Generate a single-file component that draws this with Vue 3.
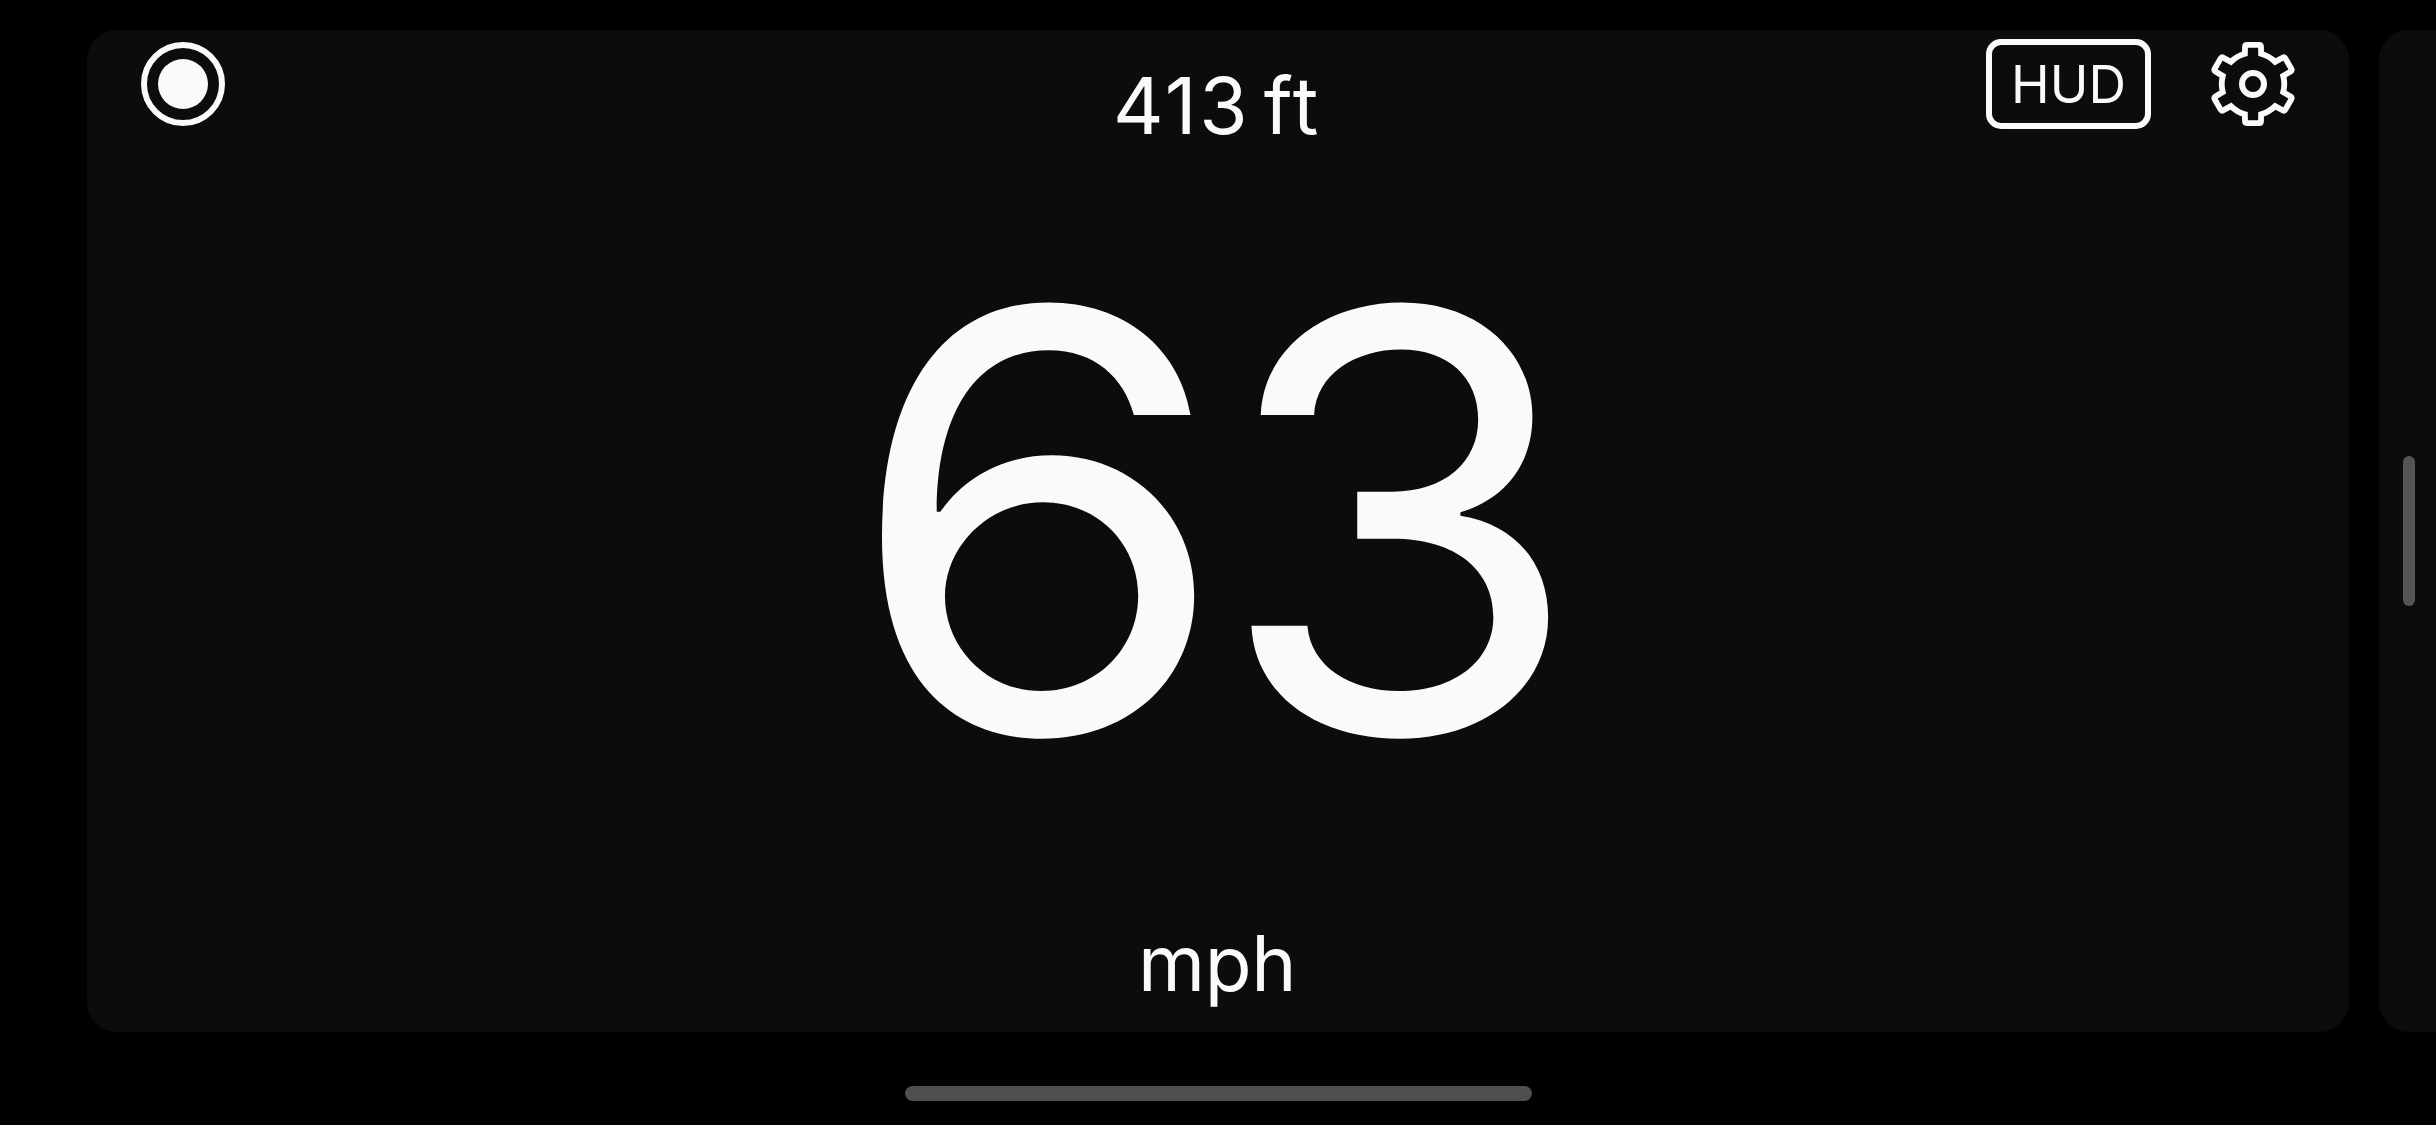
<template>
  <div class="screen">
    <div class="pages">
      <main class="panel">
        <div class="side">
          <button class="icon-btn" aria-label="Record">
            <svg viewBox="0 0 84 84" width="84" height="84">
              <circle cx="42" cy="42" r="39" fill="none" stroke="#fafafa" stroke-width="6" />
              <circle cx="42" cy="42" r="25" fill="#fafafa" />
            </svg>
          </button>
        </div>

        <div class="readout">
          <div class="altitude">{{ altitude }} ft</div>
          <div class="speed">
            <span v-for="(digit, index) in String(speed)" :key="index" class="digit">{{ digit }}</span>
          </div>
          <div class="unit">mph</div>
        </div>

        <div class="side right">
          <button class="hud-btn"><span>HUD</span></button>
          <button class="icon-btn" aria-label="Settings">
            <svg viewBox="-42 -42 84 84" width="84" height="84">
              <path :d="gearPath" fill="none" stroke="#fafafa" stroke-width="5.8" />
              <circle r="11" fill="none" stroke="#fafafa" stroke-width="6" />
            </svg>
          </button>
        </div>
      </main>

      <div class="panel next">
        <div class="scrollbar"></div>
      </div>
    </div>
    <div class="home-bar"></div>
  </div>
</template>

<script setup>
import { ref, computed } from 'vue'

const altitude = ref(413)
const speed = ref(63)

// One tooth, rotated six times and joined by arcs
const gearPath = computed(() => {
  let d = ''
  for (let i = 0; i < 6; i++) {
    const a = (i * Math.PI) / 3
    // diagonal teeth are slightly longer than the vertical ones
    const top = i % 3 === 0 ? -39.1 : -40.8
    const p = (x, y) =>
      `${(x * Math.cos(a) - y * Math.sin(a)).toFixed(2)} ${(x * Math.sin(a) + y * Math.cos(a)).toFixed(2)}`
    d += i === 0 ? `M${p(-8.1, -30.2)}` : `A31.3 31.3 0 0 1 ${p(-8.1, -30.2)}`
    d += `L${p(-8, top + 2)}Q${p(-8, top)} ${p(-6, top)}`
    d += `L${p(6, top)}Q${p(8, top)} ${p(8, top + 2)}L${p(8.1, -30.2)}`
  }
  return d + 'A31.3 31.3 0 0 1 -8.1 -30.2Z'
})
</script>

<style>
body {
  margin: 0;
  background: #000;
}
</style>

<style scoped>
.screen {
  box-sizing: border-box;
  width: 2436px;
  height: 1125px;
  padding: 30px 0 24px 87px;
  background: #000;
  color: #fafafa;
  font-family: Inter, "Liberation Sans", sans-serif;
  overflow: hidden;
  display: flex;
  flex-direction: column;
  justify-content: space-between;
}
.pages {
  display: flex;
  gap: 30px;
  height: 1002px;
}
.panel {
  box-sizing: border-box;
  flex: none;
  width: 2262px;
  background: #0c0c0c;
  border-radius: 30px;
  padding: 0 54px;
  display: grid;
  grid-template-columns: 400px 1fr 400px;
}
.side {
  display: flex;
  align-items: flex-start;
  padding-top: 12px;
}
.right {
  justify-content: flex-end;
  gap: 60px;
  padding-top: 9px;
}
.right .icon-btn {
  margin-top: 3px;
}
button {
  padding: 0;
  border: none;
  background: none;
  color: inherit;
  font-family: inherit;
}
.icon-btn svg {
  display: block;
  overflow: visible;
}
.hud-btn {
  box-sizing: border-box;
  width: 165px;
  height: 90px;
  border: 6px solid #fafafa;
  border-radius: 15px;
  font-size: 52px;
  font-weight: 400;
  line-height: 78px;
}
.hud-btn span {
  display: block;
  padding-top: 1px;
  line-height: 77px;
}
.readout {
  display: flex;
  flex-direction: column;
  align-items: center;
  white-space: nowrap;
}
.altitude {
  margin-top: 28px;
  height: 96px;
  padding-right: 2px;
  font-size: 78.4px;
  letter-spacing: 2.6px;
  word-spacing: -11px;
  line-height: 96px;
}
.speed {
  display: flex;
  margin-top: 67px;
  height: 600px;
  font-size: 584px;
  line-height: 600px;
}
.digit {
  transform: scaleX(1.022);
}
/* the round 6 is drawn a little wider than the other digits */
.digit:first-child {
  transform: scaleX(1.067);
}
.unit {
  margin-top: 94px;
  height: 96px;
  padding-right: 2px;
  font-size: 76.6px;
  letter-spacing: -0.4px;
  line-height: 96px;
}
.next {
  width: 87px;
  padding: 0 0 0 24px;
  display: flex;
  align-items: center;
}
.scrollbar {
  width: 12px;
  height: 150px;
  border-radius: 6px;
  background: #555;
}
.home-bar {
  width: 627px;
  height: 15px;
  margin-left: 818px;
  border-radius: 8px;
  background: #4f4f4f;
}
</style>
